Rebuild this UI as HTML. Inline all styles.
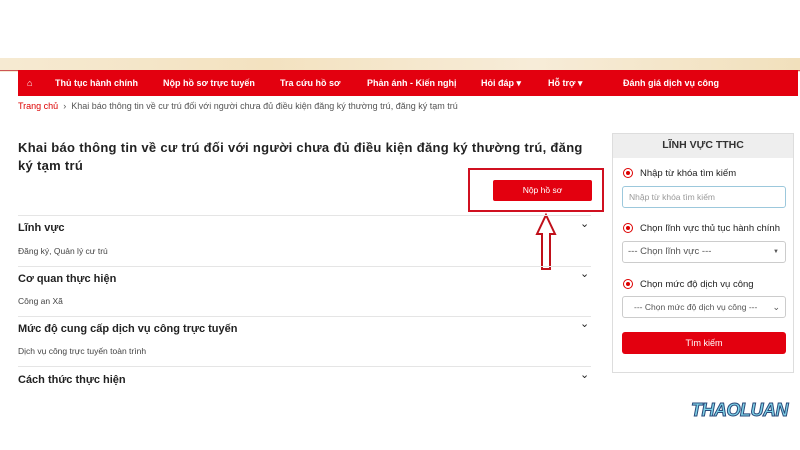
<!DOCTYPE html><html><head><meta charset="utf-8"><style>
*{box-sizing:border-box}
body{margin:0;width:800px;height:450px;background:#fff;font-family:"Liberation Sans",sans-serif;position:relative;overflow:hidden;color:#222}
.a{position:absolute}
.nav{left:18px;top:70px;width:780px;height:26px;background:#e3000f;color:#fff;font-size:9px;font-weight:bold}
.nav span{position:absolute;top:8px}
.h{font-size:11px;font-weight:bold}
.s{font-size:8.5px;color:#444}
.ln{height:1px;background:#e5e5e5;left:18px;width:573px}
.chev{font-size:11px;left:580px}
.rad{width:10px;height:10px;border:1px solid #d00;border-radius:50%;}
.rad:after{content:"";position:absolute;left:2px;top:2px;width:4px;height:4px;border-radius:50%;background:#d00}
.f{border:1px solid #ccc;border-radius:3px;background:#fff;font-size:9px;color:#555}
</style></head><body>
<div class="a" style="left:0;top:58px;width:800px;height:14px;background:linear-gradient(90deg,#f6ead2,#f3e2c0,#f7ecd8,#f1e0bc)"></div>
<div class="a" style="left:0;top:70px;width:800px;height:1px;background:#c55"></div>
<div class="a nav">
<span style="left:9px">⌂</span><span style="left:37px">Thủ tục hành chính</span><span style="left:145px">Nộp hồ sơ trực tuyến</span><span style="left:262px">Tra cứu hồ sơ</span><span style="left:349px">Phản ánh - Kiến nghị</span><span style="left:463px">Hỏi đáp ▾</span><span style="left:530px">Hỗ trợ ▾</span><span style="left:605px">Đánh giá dịch vụ công</span></div>
<div class="a" style="left:18px;top:101px;font-size:9px;color:#555"><span style="color:#d00">Trang chủ</span> &nbsp;›&nbsp; Khai báo thông tin về cư trú đối với người chưa đủ điều kiện đăng ký thường trú, đăng ký tạm trú</div>
<div class="a" style="left:18px;top:139px;width:600px;font-size:13px;font-weight:bold;line-height:18px;color:#222;white-space:nowrap;letter-spacing:0.3px">Khai báo thông tin về cư trú đối với người chưa đủ điều kiện đăng ký thường trú, đăng<br>ký tạm trú</div>
<div class="a" style="left:468px;top:168px;width:136px;height:44px;border:2px solid #d01020"></div>
<div class="a" style="left:493px;top:180px;width:99px;height:21px;background:#e3000f;border-radius:2px;color:#fff;font-size:8.5px;text-align:center;line-height:21px">Nộp hồ sơ</div>
<svg class="a" style="left:535px;top:212px" width="22" height="60"><path d="M11 3 L20 22 L15 22 L15 57 L7 57 L7 22 L2 22 Z" fill="none" stroke="#c0101a" stroke-width="2"/></svg>
<div class="a ln" style="top:215px"></div><div class="a ln" style="top:266px"></div><div class="a ln" style="top:316px"></div><div class="a ln" style="top:366px"></div>
<div class="a h" style="left:18px;top:222px">Lĩnh vực</div><div class="a chev" style="top:217px">⌄</div>
<div class="a s" style="left:18px;top:246px">Đăng ký, Quản lý cư trú</div>
<div class="a h" style="left:18px;top:273px">Cơ quan thực hiện</div><div class="a chev" style="top:267px">⌄</div>
<div class="a s" style="left:18px;top:296px">Công an Xã</div>
<div class="a h" style="left:18px;top:323px">Mức độ cung cấp dịch vụ công trực tuyến</div><div class="a chev" style="top:317px">⌄</div>
<div class="a s" style="left:18px;top:346px">Dịch vụ công trực tuyến toàn trình</div>
<div class="a h" style="left:18px;top:374px">Cách thức thực hiện</div><div class="a chev" style="top:368px">⌄</div>
<div class="a" style="left:612px;top:133px;width:182px;height:240px;border:1px solid #ddd;background:#fff"></div>
<div class="a" style="left:613px;top:134px;width:180px;height:24px;background:#eee;font-size:10.5px;font-weight:bold;text-align:center;line-height:22px;color:#333">LĨNH VỰC TTHC</div>
<div class="a rad" style="left:623px;top:168px"></div><div class="a" style="left:640px;top:168px;font-size:9.5px">Nhập từ khóa tìm kiếm</div>
<div class="a f" style="left:622px;top:186px;width:164px;height:22px;border-color:#9cc8dc;line-height:20px;padding-left:6px;color:#999;font-size:8.5px">Nhập từ khóa tìm kiếm</div>
<div class="a rad" style="left:623px;top:223px"></div><div class="a" style="left:640px;top:223px;font-size:9.5px">Chọn lĩnh vực thủ tục hành chính</div>
<div class="a f" style="left:622px;top:241px;width:164px;height:22px;line-height:20px;padding-left:5px;font-size:9.5px">--- Chọn lĩnh vực ---<span style="position:absolute;right:6px;font-size:6px">▼</span></div>
<div class="a rad" style="left:623px;top:279px"></div><div class="a" style="left:640px;top:279px;font-size:9.5px">Chọn mức độ dịch vụ công</div>
<div class="a f" style="left:622px;top:296px;width:164px;height:22px;line-height:20px;padding-left:11px;font-size:8.5px">--- Chọn mức độ dịch vụ công ---<span style="position:absolute;right:5px;font-size:9px">⌄</span></div>
<div class="a" style="left:622px;top:332px;width:164px;height:22px;background:#e3000f;border-radius:3px;color:#fff;font-size:9px;text-align:center;line-height:22px">Tìm kiếm</div>
<div class="a" style="left:691px;top:400px;font-size:18px;font-weight:bold;font-style:italic;color:#7fd3e8;-webkit-text-stroke:1px #2a4a7a;letter-spacing:-0.5px">THAOLUAN</div>
</body></html>
